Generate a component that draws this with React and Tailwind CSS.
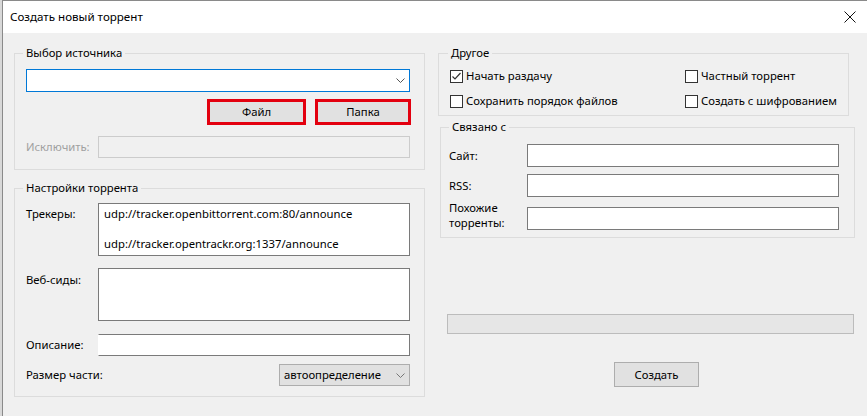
import React from "react";

const font = { fontFamily: '"Noto Sans", "Open Sans", sans-serif' };

function Chevron({ color = "#555" }) {
  return (
    <svg width="9" height="5" viewBox="0 0 9 5" className="shrink-0">
      <path d="M0.5 0.5 L4.5 4.5 L8.5 0.5" fill="none" stroke={color} strokeWidth="1" />
    </svg>
  );
}

function CheckBox({ checked, label }) {
  return (
    <div className="flex items-center h-[16px]">
      <div className="w-[13px] h-[13px] border border-[#333] bg-white flex items-center justify-center shrink-0">
        {checked && (
          <svg width="11" height="11" viewBox="0 0 11 11">
            <path d="M1.5 5.5 L4 8 L9.5 2" fill="none" stroke="#333" strokeWidth="1.2" />
          </svg>
        )}
      </div>
      <span className="ml-[3px]">{label}</span>
    </div>
  );
}

function Box({ className = "", children }) {
  return <div className={`bg-white border border-[#7a7a7a] ${className}`}>{children}</div>;
}

export default function App() {
  return (
    <div className="w-[867px] h-[416px] flex bg-[#e4e4e4] text-[11.3px] leading-[16px] text-black overflow-hidden" style={font}>
      <div className="w-[2px] shrink-0 bg-[#d8d8d8]" />
      <div className="flex-1 flex flex-col border-l border-t border-[#8a8a8a] bg-[#f0f0f0]">
        {/* title bar */}
        <div className="h-[32px] bg-white flex items-center justify-between pl-[7px] pr-[11px] shrink-0">
          <span className="text-[11.6px]">Создать новый торрент</span>
          <svg width="12" height="12" viewBox="0 0 12 12">
            <path d="M0.5 0.5 L11.5 11.5 M11.5 0.5 L0.5 11.5" stroke="#111" strokeWidth="1" />
          </svg>
        </div>

        <div className="flex pl-[11px] gap-[13px]">
          {/* left column */}
          <div className="w-[411px] flex flex-col">
            <fieldset className="mt-[12px] border border-[#dcdcdc] px-[11px] pt-[8px] pb-[11px]">
              <legend className="ml-[-3px] px-[3px]">Выбор источника</legend>
              <div className="h-[23px] bg-white border border-[#0078d7] flex items-center justify-end pr-[4px] mr-[3px]">
                <Chevron />
              </div>
              <div className="flex justify-end gap-[9px] mt-[7px] mr-[2px]">
                <div className="w-[99px] h-[26px] border-[3px] border-[#e3000f] bg-[#e1e1e1] flex items-center justify-center">Файл</div>
                <div className="w-[96px] h-[26px] border-[3px] border-[#e3000f] bg-[#e1e1e1] flex items-center justify-center">Папка</div>
              </div>
              <div className="flex items-center mt-[11px]">
                <span className="w-[72px] text-[#a0a0a0]">Исключить:</span>
                <div className="flex-1 h-[22px] border border-[#cccccc] bg-[#f0f0f0] mr-[3px]" />
              </div>
            </fieldset>

            <fieldset className="mt-[10px] border border-[#dcdcdc] px-[11px] pt-[7px] pb-[10px]">
              <legend className="ml-[-3px] px-[3px]">Настройки торрента</legend>
              <div className="flex items-start">
                <span className="w-[72px] pt-[3px] shrink-0">Трекеры:</span>
                <Box className="flex-1 h-[53px] mr-[3px] px-[5px] pt-[2px] leading-[15px] whitespace-pre-line">
                  {"udp://tracker.openbittorrent.com:80/announce\n\nudp://tracker.opentrackr.org:1337/announce"}
                </Box>
              </div>
              <div className="flex items-start mt-[12px]">
                <span className="w-[72px] pt-[4px] shrink-0">Веб-сиды:</span>
                <Box className="flex-1 h-[53px] mr-[3px]" />
              </div>
              <div className="flex items-center mt-[13px]">
                <span className="w-[72px] shrink-0">Описание:</span>
                <Box className="flex-1 h-[22px] mr-[3px] border-l-white" />
              </div>
              <div className="flex items-center justify-between mt-[8px]">
                <span>Размер части:</span>
                <div className="w-[131px] h-[22px] mr-[3px] bg-[#e1e1e1] border border-[#adadad] flex items-center justify-between pl-[4px] pr-[4px]">
                  <span>автоопределение</span>
                  <Chevron color="#777" />
                </div>
              </div>
            </fieldset>
          </div>

          {/* right column */}
          <div className="w-[416px] flex flex-col">
            <fieldset className="mt-[12px] w-[411px] border border-[#dcdcdc] pl-[11px] pt-[7px] pb-[6px]">
              <legend className="ml-[-2px] px-[3px]">Другое</legend>
              <div className="grid grid-cols-[235px_1fr] gap-y-[9px]">
                <CheckBox checked label="Начать раздачу" />
                <CheckBox label="Частный торрент" />
                <CheckBox label="Сохранить порядок файлов" />
                <CheckBox label="Создать с шифрованием" />
              </div>
            </fieldset>

            <fieldset className="mt-[3px] ml-[2px] w-[415px] border border-[#dcdcdc] pl-[8px] pr-[15px] pt-[9px] pb-[1px]">
              <legend className="ml-[0px] px-[3px]">Связано с</legend>
              <div className="flex items-center">
                <span className="w-[78px] shrink-0">Сайт:</span>
                <Box className="flex-1 h-[23px]" />
              </div>
              <div className="flex items-center mt-[7px]">
                <span className="w-[78px] shrink-0">RSS:</span>
                <Box className="flex-1 h-[23px]" />
              </div>
              <div className="flex items-center mt-[3px]">
                <span className="w-[78px] shrink-0 leading-[15px] mb-[6px]">Похожие<br />торренты:</span>
                <Box className="flex-1 h-[23px]" />
              </div>
            </fieldset>

            <div className="mt-[76px] ml-[9px] w-[407px] h-[20px] bg-[#e6e6e6] border border-[#bcbcbc]" />

            <div className="mt-[28px] ml-[176px] w-[85px] h-[25px] bg-[#e1e1e1] border border-[#adadad] flex items-center justify-center">
              Создать
            </div>
          </div>
        </div>
      </div>
    </div>
  );
}
